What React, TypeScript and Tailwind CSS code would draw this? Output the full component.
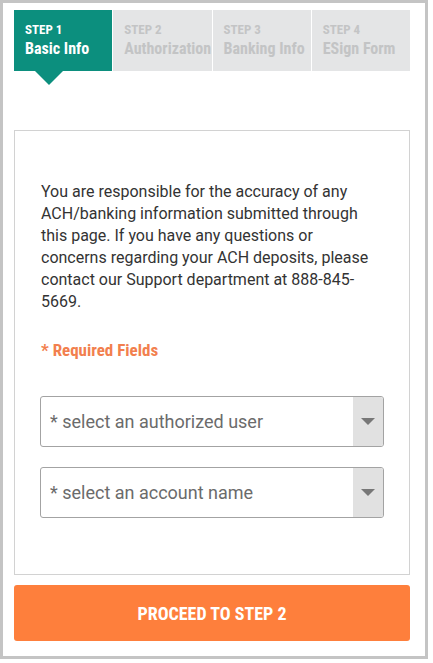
import React from 'react';

const condensed = 'font-["Roboto_Condensed","Liberation_Sans_Narrow",Roboto,sans-serif]';

const steps = [
  { n: 'STEP 1', label: 'Basic Info', active: true },
  { n: 'STEP 2', label: 'Authorization', active: false },
  { n: 'STEP 3', label: 'Banking Info', active: false },
  { n: 'STEP 4', label: 'ESign Form', active: false },
];

const SelectBox: React.FC<{ placeholder: string }> = ({ placeholder }) => (
  <div className="flex h-[51px] overflow-hidden rounded-[3px] border border-[#a3a3a3] bg-white">
    <div className="flex flex-1 items-center pl-[9px] text-[18px] text-[#6b6b6b]">{placeholder}</div>
    <div className="flex w-[30px] items-center justify-center bg-[#e1e1e1]">
      <div className="h-0 w-0 border-l-[7px] border-r-[7px] border-t-[7px] border-l-transparent border-r-transparent border-t-[#777]" />
    </div>
  </div>
);

export default function App() {
  return (
    <div className="font-[Roboto,sans-serif]">
      <div className="flex h-[659px] w-[428px] flex-col border-[3px] border-[#c4c4c4] bg-white pb-[15px] pl-[11px] pr-[15px] pt-[7px]">
        <div className="flex gap-px">
          {steps.map(s => (
            <div
              key={s.n}
              className={`relative h-[61px] flex-1 pl-[11px] pt-[12px] font-bold ${condensed} ${
                s.active ? 'bg-[#0c8f7e] text-white' : 'bg-[#e4e5e6] text-[#c3c4c5]'
              }`}
            >
              <div className="text-[13px] leading-[16px]">{s.n}</div>
              <div className="whitespace-nowrap text-[16px] leading-[22px]">{s.label}</div>
              {s.active && (
                <div className="absolute left-[21px] top-[61px] h-0 w-0 border-l-[14px] border-r-[14px] border-t-[14px] border-l-transparent border-r-transparent border-t-[#0c8f7e]" />
              )}
            </div>
          ))}
        </div>

        <div className="mt-[59px] border border-[#d2d2d2] px-[25px] pb-[56px] pt-[50px]">
          <p className="pl-px pr-[10px] text-[16px] leading-[22px] text-[#333]">
            You are responsible for the accuracy of any ACH/banking information submitted through this page. If you
            have any questions or concerns regarding your ACH deposits, please contact our Support department at
            888-845-5669.
          </p>
          <div className={`mt-[27px] pl-px text-[17px] font-bold leading-[20px] text-[#f27f4e] ${condensed}`}>
            * Required Fields
          </div>
          <div className="mt-[36px] flex flex-col gap-[20px]">
            <SelectBox placeholder="* select an authorized user" />
            <SelectBox placeholder="* select an account name" />
          </div>
        </div>

        <button
          className={`mt-[10px] h-[56px] rounded-[3px] bg-[#fe7f3c] text-[18px] font-bold uppercase text-white ${condensed}`}
        >
          Proceed to Step 2
        </button>
      </div>
    </div>
  );
}
